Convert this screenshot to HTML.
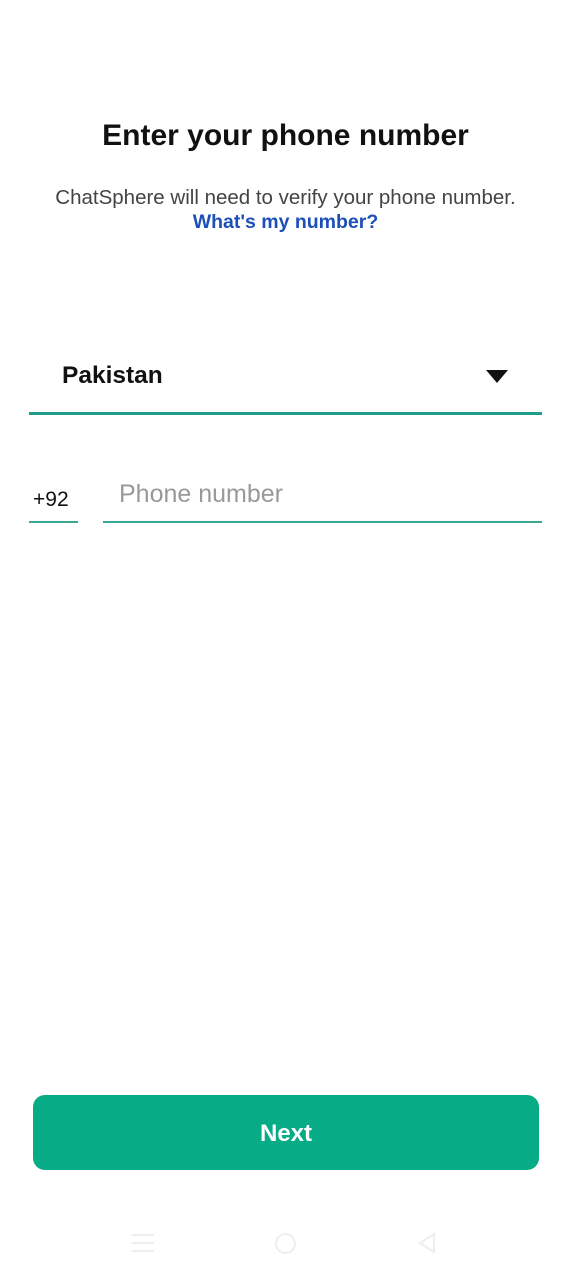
<!DOCTYPE html>
<html><head><style>
body{margin:0;width:571px;height:1280px;background:#fff;position:relative;font-family:"Liberation Sans",Roboto,sans-serif;overflow:hidden}
.a{position:absolute}
</style></head><body>
<div class="a" style="top:119px;left:0;width:571px;text-align:center;font-size:30px;font-weight:bold;color:#111">Enter your phone number</div>
<div class="a" style="top:186px;left:0;width:571px;text-align:center;font-size:20.5px;color:#444">ChatSphere will need to verify your phone number.</div>
<div class="a" style="top:211px;left:0;width:571px;text-align:center;font-size:19.5px;font-weight:bold;color:#1c4fb8">What's my number?</div>
<div class="a" style="top:362px;left:62px;font-size:24.5px;font-weight:bold;color:#111">Pakistan</div>
<div class="a" style="top:370px;left:486px;width:0;height:0;border-left:11px solid transparent;border-right:11px solid transparent;border-top:13px solid #111"></div>
<div class="a" style="top:412px;left:29px;width:513px;height:3px;background:#1e9e86"></div>
<div class="a" style="top:488px;left:33px;font-size:21px;color:#111">+92</div>
<div class="a" style="top:521px;left:29px;width:49px;height:2px;background:#3aa896"></div>
<div class="a" style="top:480px;left:119px;font-size:25px;color:#999">Phone number</div>
<div class="a" style="top:521px;left:103px;width:439px;height:2px;background:#3aa896"></div>
<div class="a" style="top:1095px;left:33px;width:506px;height:75px;background:#07ab86;border-radius:12px;color:#fff;font-size:24px;font-weight:bold;text-align:center;line-height:77px">Next</div>
<div class="a" style="top:1234px;left:132px;width:22px;height:2px;background:#eee;box-shadow:0 8px 0 #eee,0 16px 0 #eee"></div>
<div class="a" style="top:1233px;left:275px;width:17px;height:17px;border:2px solid #eee;border-radius:50%"></div>
<svg class="a" style="top:1232px;left:416px" width="22" height="22"><path d="M18 2 L4 11 L18 20 Z" fill="none" stroke="#eee" stroke-width="2"/></svg>
</body></html>
